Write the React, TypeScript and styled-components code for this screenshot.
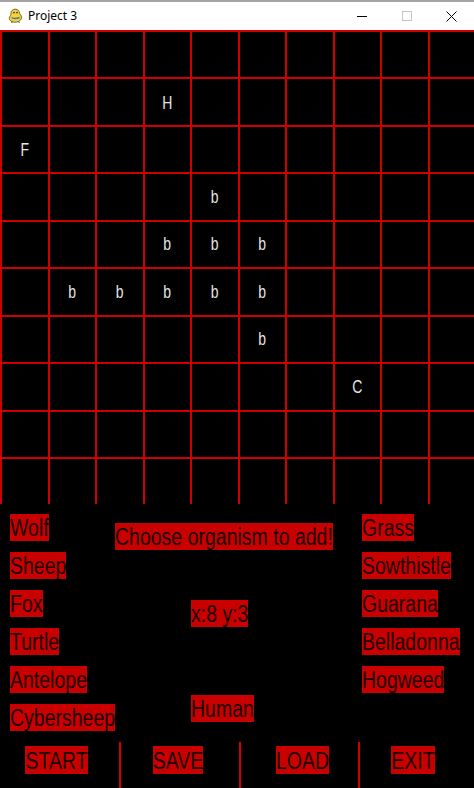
import React from "react";
import styled, { createGlobalStyle } from "styled-components";

const GlobalStyle = createGlobalStyle`
  html, body { margin: 0; padding: 0; background: #000; }
  body { width: 474px; height: 788px; overflow: hidden; }
`;

const RED = "#d00000";
const LABEL_BG = "#c80000";
const LABEL_FG = "#1c0000";
const SANS = `"Liberation Sans", Arial, sans-serif`;

const Window = styled.div`
  width: 474px;
  height: 788px;
  display: flex;
  flex-direction: column;
  background: #000;
  border-top: 2px solid #a3a3a3;
  box-sizing: border-box;
  overflow: hidden;
`;

const TitleBar = styled.div`
  height: 28px;
  flex: none;
  background: #fff;
  display: flex;
  align-items: center;
  padding-left: 8px;
  font-family: "Noto Sans", "Open Sans", sans-serif;
  font-size: 12px;
  color: #000;
`;

const TitleText = styled.span`
  margin-left: 5px;
  flex: 1;
  line-height: 1;
  padding-bottom: 1px;
`;

const Control = styled.div`
  width: 45px;
  height: 28px;
  display: flex;
  align-items: center;
  justify-content: center;
`;

const Board = styled.div`
  flex: none;
  display: grid;
  grid-template-columns: repeat(10, 47.5px);
  grid-template-rows: repeat(10, 47.45px);
  width: 475px;
`;

const Cell = styled.div`
  border-top: 2px solid ${RED};
  border-left: 2px solid ${RED};
  display: flex;
  align-items: center;
  justify-content: center;
  font-family: ${SANS};
  font-size: 14px;
  color: #e6e6e6;
`;

const CellGlyph = styled.span`
  display: inline-block;
  transform: scaleY(1.3);
  line-height: 1;
`;

const Panel = styled.div`
  height: 238px;
  flex: none;
  display: grid;
  grid-template-columns: 105px 247px 1fr;
  padding-left: 10px;
  box-sizing: border-box;
`;

const Column = styled.div<{ $top: number; $gap?: number }>`
  display: flex;
  flex-direction: column;
  align-items: flex-start;
  padding-top: ${(p) => p.$top}px;
  gap: ${(p) => p.$gap ?? 0}px;
`;

const Label = styled.span<{ $mt?: number; $ml?: number; $h?: number }>`
  display: inline-flex;
  align-items: center;
  background: ${LABEL_BG};
  color: ${LABEL_FG};
  font-family: ${SANS};
  font-size: 19.5px;
  height: ${(p) => p.$h ?? 27}px;
  white-space: nowrap;
  margin-top: ${(p) => p.$mt ?? 0}px;
  margin-left: ${(p) => p.$ml ?? 0}px;
`;

const LabelText = styled.span`
  display: inline-block;
  line-height: 1;
  transform: scaleY(1.18);
  padding-top: 2px;
`;

const ButtonBar = styled.div`
  flex: 1;
  display: grid;
  grid-template-columns: 119px 120px 119px 1fr;
`;

const ButtonSlot = styled.div<{ $sep: boolean; $shift: number }>`
  display: flex;
  justify-content: center;
  align-items: flex-start;
  padding-top: 4px;
  padding-left: ${(p) => Math.max(p.$shift, 0) * 2}px;
  padding-right: ${(p) => Math.max(-p.$shift, 0) * 2}px;
  border-left: ${(p) => (p.$sep ? `2px solid ${RED}` : "none")};
`;

const PygameIcon = () => (
  <svg width="15" height="16" viewBox="0 0 15 16">
    <path
      d="M4 2.5c1.5-1.8 5-1.8 6.5 0 1.3 1.5.8 3.2 2 4.2 1.5 1.3 1.4 4-.2 5.6-1.8 1.9-5.4 2.4-8 1.5C2 13 .9 11.2 1.4 9.3c.4-1.5 1.8-2 1.6-3.5-.2-1.2.1-2.4 1-3.3z"
      fill="#f2d43a"
      stroke="#6b5a16"
      strokeWidth="0.9"
    />
    <path d="M3.5 9.5c2 1.2 5.5 1.2 8 0" stroke="#4b6fa8" strokeWidth="1.4" fill="none" />
    <circle cx="6" cy="4.6" r="0.9" fill="#333" />
    <circle cx="9" cy="4.6" r="0.9" fill="#333" />
    <path d="M4.5 13.5l-1 1.5M10.5 13.5l1 1.5" stroke="#6b5a16" strokeWidth="1" />
  </svg>
);

const organisms: Record<string, string> = {
  "1-3": "H",
  "2-0": "F",
  "3-4": "b",
  "4-3": "b",
  "4-4": "b",
  "4-5": "b",
  "5-1": "b",
  "5-2": "b",
  "5-3": "b",
  "5-4": "b",
  "5-5": "b",
  "6-5": "b",
  "7-7": "C",
};

const animals = ["Wolf", "Sheep", "Fox", "Turtle", "Antelope", "Cybersheep"];
const plants = ["Grass", "Sowthistle", "Guarana", "Belladonna", "Hogweed"];
const actions = [
  { name: "START", shift: -3 },
  { name: "SAVE", shift: -2 },
  { name: "LOAD", shift: 3 },
  { name: "EXIT", shift: -4 },
];

export default function App() {
  const cells = [];
  for (let r = 0; r < 10; r++) {
    for (let c = 0; c < 10; c++) {
      const g = organisms[`${r}-${c}`];
      cells.push(<Cell key={`${r}-${c}`}>{g ? <CellGlyph>{g}</CellGlyph> : null}</Cell>);
    }
  }
  return (
    <>
      <GlobalStyle />
      <Window>
        <TitleBar>
          <PygameIcon />
          <TitleText>Project 3</TitleText>
          <Control>
            <svg width="10" height="10" viewBox="0 0 10 10">
              <line x1="0" y1="5.5" x2="10" y2="5.5" stroke="#000" strokeWidth="1" />
            </svg>
          </Control>
          <Control>
            <svg width="10" height="10" viewBox="0 0 10 10">
              <rect x="0.5" y="0.5" width="9" height="9" fill="none" stroke="#c4c4c4" strokeWidth="1" />
            </svg>
          </Control>
          <Control>
            <svg width="11" height="11" viewBox="0 0 11 11">
              <path d="M0.5 0.5L10.5 10.5M10.5 0.5L0.5 10.5" stroke="#000" strokeWidth="1" />
            </svg>
          </Control>
        </TitleBar>
        <Board>{cells}</Board>
        <Panel>
          <Column $top={10} $gap={11}>
            {animals.map((a) => (
              <Label key={a}>
                <LabelText>{a}</LabelText>
              </Label>
            ))}
          </Column>
          <Column $top={19}>
            <Label>
              <LabelText>Choose organism to add!</LabelText>
            </Label>
            <Label $mt={50} $ml={76}>
              <LabelText>x:8 y:3</LabelText>
            </Label>
            <Label $mt={68} $ml={76}>
              <LabelText>Human</LabelText>
            </Label>
          </Column>
          <Column $top={10} $gap={11}>
            {plants.map((p) => (
              <Label key={p}>
                <LabelText>{p}</LabelText>
              </Label>
            ))}
          </Column>
        </Panel>
        <ButtonBar>
          {actions.map((a, i) => (
            <ButtonSlot key={a.name} $sep={i > 0} $shift={a.shift}>
              <Label $h={28}>
                <LabelText>{a.name}</LabelText>
              </Label>
            </ButtonSlot>
          ))}
        </ButtonBar>
      </Window>
    </>
  );
}
